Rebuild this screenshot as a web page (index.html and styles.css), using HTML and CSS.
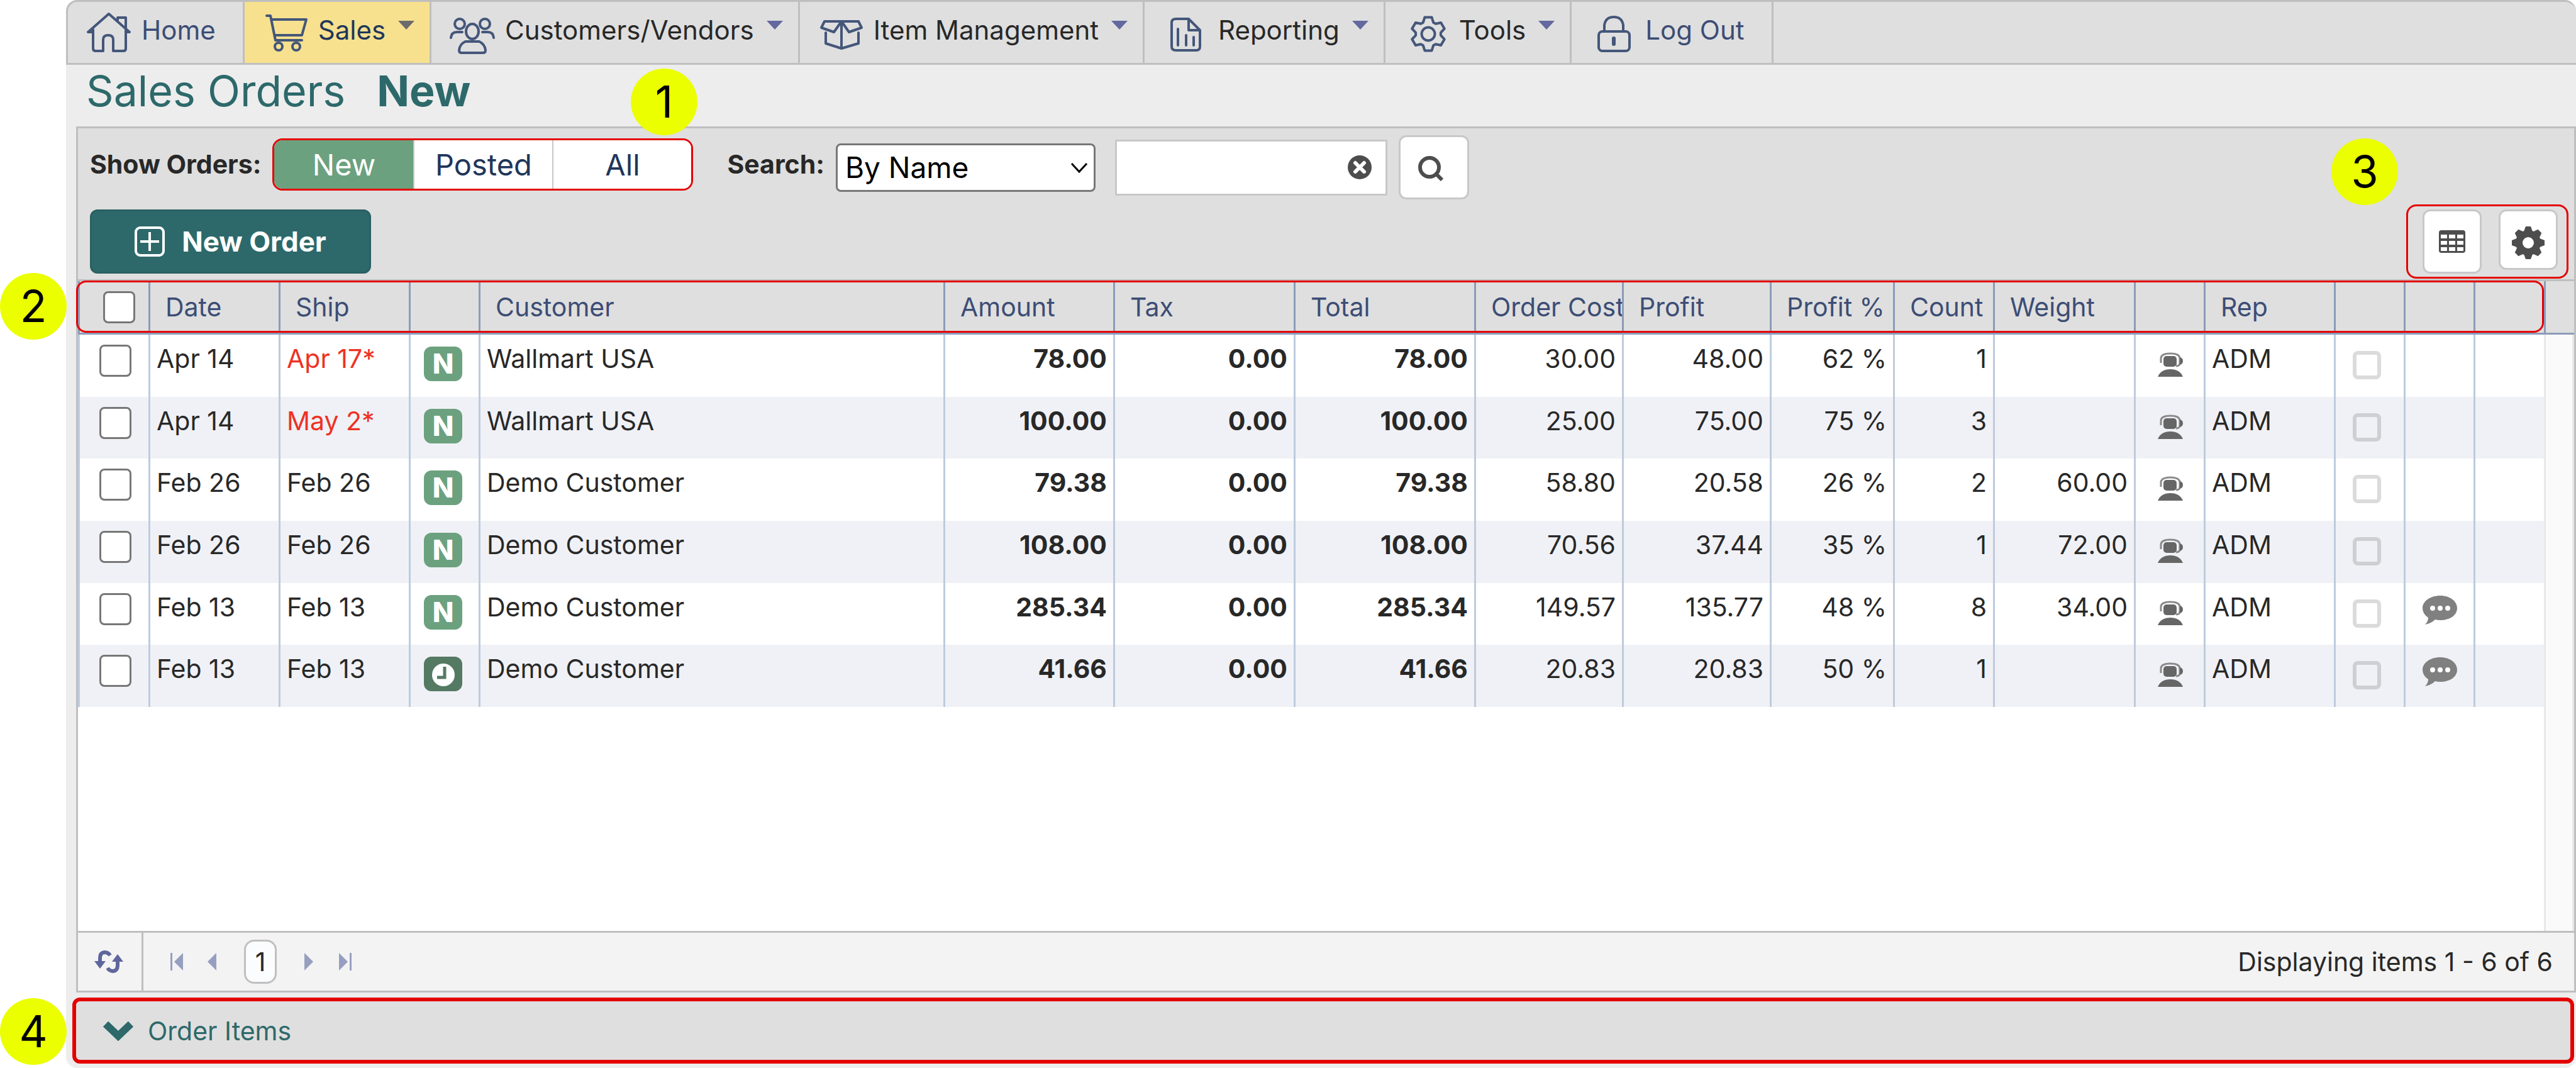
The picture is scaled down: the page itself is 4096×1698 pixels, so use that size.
FILE: index.html
```html
<!DOCTYPE html>
<html lang="en">
<head>
<meta charset="utf-8">
<title>Sales Orders</title>
<link rel="stylesheet" href="styles.css">
</head>
<body>
<svg class="sprite" aria-hidden="true">
  <symbol id="agent" viewBox="0 0 40 40">
    <path d="M5 17V9Q6 2 20 2T35 9V17Q35 22 29 22" fill="none" stroke="#8a8a8a" stroke-width="3"/>
    <rect x="9" y="6" width="21" height="17" rx="5" fill="#666"/>
    <path d="M35 8q5 1 5 6t-5 6z" fill="#666"/>
    <path d="M0 39Q5 27 20 27T40 39z" fill="#666"/>
  </symbol>
  <symbol id="comment" viewBox="0 0 56 46">
    <path d="M28 0C44 0 55 9 55 20S44 39 28 39Q23 39 20 38Q14 44 4 46Q9 41 9 35Q0 29 0 20C0 9 12 0 28 0z" fill="#808080"/>
    <circle cx="16" cy="20" r="4" fill="#fff"/><circle cx="28" cy="20" r="4" fill="#fff"/><circle cx="40" cy="20" r="4" fill="#fff"/>
  </symbol>
  <symbol id="clock" viewBox="0 0 61 55">
    <rect width="61" height="55" rx="12" fill="#557a64"/>
    <circle cx="31" cy="29" r="18" fill="#fff"/>
    <path d="M33 16V33H21" fill="none" stroke="#557a64" stroke-width="5"/>
  </symbol>
</svg>
<div class="page">
  <nav class="nav">
    <a class="nav-item nav-link" href="#"><svg class="nav-icon" viewBox="0 0 76 76"><path d="M4 35H12M4 35L37 6L70 35H64M12 31V61Q12 65 16 65H28V47Q28 40 36 40T44 47V65H60Q64 65 64 61V12H51V18"/></svg><span class="nav-text">Home</span></a>
    <a class="nav-item nav-active" href="#"><svg class="nav-icon" viewBox="0 0 76 76"><path d="M7 9H13L21 48H63M15 15H70L63 40H20"/><circle cx="26" cy="58" r="6"/><circle cx="54" cy="58" r="6"/></svg><span class="nav-text">Sales</span><span class="caret"></span></a>
    <a class="nav-item" href="#"><svg class="nav-icon" viewBox="0 0 76 76"><circle cx="17" cy="22" r="8"/><circle cx="57" cy="22" r="8"/><ellipse cx="37" cy="34" rx="10" ry="12"/><path d="M3 44Q4 35 12 35H21M71 44Q70 35 62 35H53M26 50H48Q57 54 58 64Q58 68 54 68H20Q16 68 16 64Q17 54 26 50z"/></svg><span class="nav-text">Customers/Vendors</span><span class="caret"></span></a>
    <a class="nav-item" href="#"><svg class="nav-icon" viewBox="0 0 76 76"><path d="M38 18H11L6 28L26 35L38 18L50 35L70 28L65 18H38V61L13 53V36M38 61L65 53V36"/></svg><span class="nav-text">Item Management</span><span class="caret"></span></a>
    <a class="nav-item" href="#"><svg class="nav-icon" viewBox="0 0 76 76"><path d="M22 14H42L60 32V58Q60 64 54 64H22Q15 64 15 58V20Q15 14 22 14zM42 14V32H60M25 30V56M38 40V56M50 43V56"/></svg><span class="nav-text">Reporting</span><span class="caret"></span></a>
    <a class="nav-item" href="#"><svg class="nav-icon" viewBox="0 0 76 76"><g transform="translate(40 38)"><path d="M-5.6-26.4H5.6L8.1-18.3L11.8-16.2L20.1-18L25.7-8.4L19.9-2.1V2.1L25.7 8.4L20.1 18L11.8 16.2L8.1 18.3L5.6 26.4H-5.6L-8.1 18.3L-11.8 16.2L-20.1 18L-25.7 8.4L-19.9 2.1V-2.1L-25.7-8.4L-20.1-18L-11.8-16.2L-8.1-18.3z"/><circle r="10.5"/></g></svg><span class="nav-text">Tools</span><span class="caret"></span></a>
    <a class="nav-item nav-link" href="#"><svg class="nav-icon" viewBox="0 0 76 76"><rect x="15" y="34" width="49" height="31" rx="6"/><path d="M24 34V24Q26 11 39 11T54 24V34"/><path d="M39 45V54" stroke-width="6"/></svg><span class="nav-text">Log Out</span></a>
  </nav>

  <h1 class="title"><span>Sales Orders</span><strong>New</strong></h1>

  <main class="panel">
    <div class="toolbar">
      <div class="toolbar-row">
        <div class="filters">
          <span class="label">Show Orders:</span>
          <div class="segments">
            <button class="segment segment-on" type="button">New</button>
            <button class="segment" type="button">Posted</button>
            <button class="segment" type="button">All</button>
          </div>
          <label class="label search-label" for="search-by">Search:</label>
        </div>
        <div class="select-wrap">
          <select class="select" id="search-by"><option>By Name</option></select>
          <svg class="select-arrow" viewBox="0 0 28 18"><path d="M2 2L14 15L26 2" fill="none" stroke="#000" stroke-width="3"/></svg>
        </div>
        <div class="search-field">
          <input class="search-input" type="text" aria-label="Search text">
          <button class="clear" type="button" aria-label="Clear"><svg viewBox="0 0 38 38"><circle cx="19" cy="19" r="19" fill="#4d4d4d"/><path d="M12 12L26 26M26 12L12 26" stroke="#fff" stroke-width="6" stroke-linecap="round"/></svg></button>
        </div>
        <button class="tool search-button" type="button" aria-label="Search"><svg width="44" height="44" viewBox="0 0 44 44"><circle cx="18" cy="22" r="15" fill="none" stroke="#4d4d4d" stroke-width="6"/><path d="M29 33L38 42" stroke="#4d4d4d" stroke-width="6"/></svg></button>
      </div>
      <div class="toolbar-row toolbar-actions">
        <button class="new-order" type="button"><svg width="48" height="48" viewBox="0 0 48 48" fill="none" stroke="#fff" stroke-width="4"><rect x="2" y="2" width="44" height="44" rx="7"/><path d="M24 9V39M9 24H39"/></svg><span>New Order</span></button>
        <div class="view-tools">
          <button class="tool" type="button" aria-label="Columns"><svg width="42" height="36" viewBox="0 0 42 36"><rect width="42" height="36" rx="4" fill="#4d4d4d"/><path d="M3 7h10v6H3zM16 7h10v6H16zM29 7h10v6H29zM3 17h10v6H3zM16 17h10v6H16zM29 17h10v6H29zM3 27h10v6H3zM16 27h10v6H16zM29 27h10v6H29z" fill="#fff"/></svg></button>
          <button class="tool tool-gear" type="button" aria-label="Settings"><svg width="54" height="54" viewBox="-27 -27 54 54"><g fill="#4d4d4d"><path id="tooth" d="M-4-26H4L7-18V18L4 26H-4L-7 18V-18z"/><use href="#tooth" transform="rotate(45)"/><use href="#tooth" transform="rotate(90)"/><use href="#tooth" transform="rotate(135)"/><circle r="20"/></g><circle r="9" fill="#fff"/></svg></button>
        </div>
      </div>
    </div>

    <div class="grid">
      <table class="orders">
        <colgroup><col class="c-check"><col class="c-date"><col class="c-date"><col class="c-icon"><col><col class="c-amount"><col class="c-total"><col class="c-total"><col class="c-cost"><col class="c-cost"><col class="c-percent"><col class="c-count"><col class="c-weight"><col class="c-icon"><col class="c-date"><col class="c-icon"><col class="c-icon"><col class="c-check"></colgroup>
        <thead>
          <tr><th class="pick"><input class="check" type="checkbox" aria-label="Select all"></th><th>Date</th><th>Ship</th><th></th><th>Customer</th><th>Amount</th><th>Tax</th><th>Total</th><th>Order Cost</th><th>Profit</th><th>Profit %</th><th>Count</th><th>Weight</th><th></th><th>Rep</th><th></th><th></th><th></th></tr>
        </thead>
        <tbody>
          <tr><td class="pick"><input class="check" type="checkbox" aria-label="Select order"></td><td>Apr 14</td><td class="late">Apr 17*</td><td class="status"><span class="status-new">N</span></td><td>Wallmart USA</td><td class="num sum">78.00</td><td class="num sum">0.00</td><td class="num sum">78.00</td><td class="num">30.00</td><td class="num">48.00</td><td class="num">62 %</td><td class="num">1</td><td class="num"></td><td class="agent"><svg><use href="#agent"/></svg></td><td>ADM</td><td class="flag"><span></span></td><td class="note"></td><td></td></tr>
          <tr><td class="pick"><input class="check" type="checkbox" aria-label="Select order"></td><td>Apr 14</td><td class="late">May 2*</td><td class="status"><span class="status-new">N</span></td><td>Wallmart USA</td><td class="num sum">100.00</td><td class="num sum">0.00</td><td class="num sum">100.00</td><td class="num">25.00</td><td class="num">75.00</td><td class="num">75 %</td><td class="num">3</td><td class="num"></td><td class="agent"><svg><use href="#agent"/></svg></td><td>ADM</td><td class="flag"><span></span></td><td class="note"></td><td></td></tr>
          <tr><td class="pick"><input class="check" type="checkbox" aria-label="Select order"></td><td>Feb 26</td><td>Feb 26</td><td class="status"><span class="status-new">N</span></td><td>Demo Customer</td><td class="num sum">79.38</td><td class="num sum">0.00</td><td class="num sum">79.38</td><td class="num">58.80</td><td class="num">20.58</td><td class="num">26 %</td><td class="num">2</td><td class="num">60.00</td><td class="agent"><svg><use href="#agent"/></svg></td><td>ADM</td><td class="flag"><span></span></td><td class="note"></td><td></td></tr>
          <tr><td class="pick"><input class="check" type="checkbox" aria-label="Select order"></td><td>Feb 26</td><td>Feb 26</td><td class="status"><span class="status-new">N</span></td><td>Demo Customer</td><td class="num sum">108.00</td><td class="num sum">0.00</td><td class="num sum">108.00</td><td class="num">70.56</td><td class="num">37.44</td><td class="num">35 %</td><td class="num">1</td><td class="num">72.00</td><td class="agent"><svg><use href="#agent"/></svg></td><td>ADM</td><td class="flag"><span></span></td><td class="note"></td><td></td></tr>
          <tr><td class="pick"><input class="check" type="checkbox" aria-label="Select order"></td><td>Feb 13</td><td>Feb 13</td><td class="status"><span class="status-new">N</span></td><td>Demo Customer</td><td class="num sum">285.34</td><td class="num sum">0.00</td><td class="num sum">285.34</td><td class="num">149.57</td><td class="num">135.77</td><td class="num">48 %</td><td class="num">8</td><td class="num">34.00</td><td class="agent"><svg><use href="#agent"/></svg></td><td>ADM</td><td class="flag"><span></span></td><td class="note"><svg><use href="#comment"/></svg></td><td></td></tr>
          <tr><td class="pick"><input class="check" type="checkbox" aria-label="Select order"></td><td>Feb 13</td><td>Feb 13</td><td class="status"><svg><use href="#clock"/></svg></td><td>Demo Customer</td><td class="num sum">41.66</td><td class="num sum">0.00</td><td class="num sum">41.66</td><td class="num">20.83</td><td class="num">20.83</td><td class="num">50 %</td><td class="num">1</td><td class="num"></td><td class="agent"><svg><use href="#agent"/></svg></td><td>ADM</td><td class="flag"><span></span></td><td class="note"><svg><use href="#comment"/></svg></td><td></td></tr>
        </tbody>
      </table>
      <div class="gutter"><div class="gutter-head"></div><div class="gutter-track"></div></div>
      <div class="header-outline"></div>
    </div>

    <div class="pager">
      <button class="pager-button refresh" type="button" aria-label="Refresh"><svg width="46" height="36" viewBox="0 0 46 36" fill="none" stroke="#5f659c" stroke-width="6"><path d="M25 8Q22 3 16 3Q9 4 9 12V20"/><path d="M0 17H18L9 29z" fill="#5f659c" stroke="none"/><path d="M21 28Q24 33 30 33Q37 32 37 24V14"/><path d="M28 18H46L37 6z" fill="#5f659c" stroke="none"/></svg></button>
      <div class="pages">
        <button class="pager-button" type="button" aria-label="First page"><svg width="20" height="28" viewBox="0 0 20 28" fill="#979fc0"><path d="M0 0H3V28H0zM20 0V28L6 14z"/></svg></button>
        <button class="pager-button prev" type="button" aria-label="Previous page"><svg width="14" height="28" viewBox="0 0 14 28" fill="#979fc0"><path d="M14 0V28L0 14z"/></svg></button>
        <button class="pager-button page-number" type="button">1</button>
        <button class="pager-button next" type="button" aria-label="Next page"><svg width="14" height="28" viewBox="0 0 14 28" fill="#979fc0"><path d="M0 0V28L14 14z"/></svg></button>
        <button class="pager-button" type="button" aria-label="Last page"><svg width="20" height="28" viewBox="0 0 20 28" fill="#979fc0"><path d="M17 0H20V28H17zM0 0V28L14 14z"/></svg></button>
      </div>
      <span class="pager-info">Displaying items 1 - 6 of 6</span>
    </div>
  </main>

  <button class="order-items" type="button"><svg width="50" height="32" viewBox="0 0 50 32"><path d="M5 5L25 24L45 5" fill="none" stroke="#2d696a" stroke-width="12"/></svg><span>Order Items</span></button>
</div>
<div class="badge badge-1">1</div>
<div class="badge badge-2">2</div>
<div class="badge badge-3">3</div>
<div class="badge badge-4">4</div>
</body>
</html>
```
FILE: styles.css
```css
* { box-sizing: border-box; }

body {
  margin: 0;
  position: relative;
  background: #fff;
  color: #282828;
  font-family: Inter, "Liberation Sans", sans-serif;
  font-size: 41px;
}

button, input, select { margin: 0; padding: 0; color: inherit; font: inherit; }
a { color: inherit; text-decoration: none; }
svg { display: block; }
.sprite { position: absolute; width: 0; height: 0; }

.page {
  display: flex;
  flex-direction: column;
  min-height: 100vh;
  margin-left: 105px;
  padding-bottom: 7px;
  background: #ededed;
  border-radius: 18px;
}

/* Main menu */
.nav {
  display: flex;
  height: 103px;
  background: #dfdfdf;
  border: 3px solid #bfbfbf;
  border-right: 0;
  border-radius: 18px 18px 0 0;
  font-size: 42px;
}
.nav-item {
  display: flex;
  align-items: flex-start;
  padding: 0 24px 0 28px;
  border-right: 3px solid #bfbfbf;
}
.nav-link { padding-right: 43px; color: #3c4d75; }
.nav-active { background: #f7e18f; color: #20365a; }
.nav-icon {
  width: 76px;
  height: 76px;
  margin: 13px 13px 0 0;
  fill: none;
  stroke: #44567a;
  stroke-width: 4;
  stroke-linejoin: round;
  stroke-linecap: round;
}
.nav-text { line-height: 89px; white-space: nowrap; }
.caret {
  margin: 30px 0 0 20px;
  border: 13px solid transparent;
  border-top: 14px solid #63689e;
  border-bottom: 0;
}
.nav-active .caret { border-top-color: #6b6b6b; }

.title {
  display: flex;
  gap: 50px;
  height: 98px;
  margin: 0;
  padding-left: 32px;
  color: #2d696a;
  font-size: 68px;
  font-weight: 400;
  line-height: 82px;
}

/* Orders panel */
.panel {
  display: flex;
  flex: 1;
  flex-direction: column;
  margin-left: 16px;
  border: 3px solid #bfbfbf;
  background: #fff;
}
.toolbar {
  display: flex;
  flex-direction: column;
  gap: 8px;
  padding: 11px 9px 1px 19px;
  background: #dfdfdf;
  border-bottom: 3px solid #bfbfbf;
}
.toolbar-row { display: flex; align-items: center; }
.toolbar-actions { justify-content: space-between; }
.filters { display: flex; align-items: center; padding-bottom: 10px; }
.label { font-weight: 700; }
.search-label { margin-left: 54px; }
.segments {
  display: flex;
  margin-left: 18px;
  border: 3px solid #e50000;
  border-radius: 16px;
  background: #fff;
  overflow: hidden;
}
.segment {
  width: 221px;
  height: 77px;
  border: 0;
  border-left: 2px solid #c8c8c8;
  background: #fff;
  color: #20365a;
  font-size: 47px;
}
.segment-on { border-left: 0; background: #6ca17f; color: #fff; }

.select-wrap { position: relative; margin-left: 18px; }
.select {
  display: block;
  width: 413px;
  height: 77px;
  padding-left: 12px;
  appearance: none;
  border: 3px solid #777;
  border-radius: 8px;
  background: #fff;
  color: #000;
  font-size: 46px;
}
.select-arrow {
  position: absolute;
  right: 12px;
  top: 30px;
  width: 28px;
  height: 18px;
  pointer-events: none;
}
.search-field {
  display: flex;
  align-items: center;
  width: 433px;
  height: 89px;
  margin-left: 31px;
  padding-right: 22px;
  border: 3px solid #c8c8c8;
  background: #fff;
}
.search-input { flex: 1; min-width: 0; height: 100%; padding: 0 20px; border: 0; background: transparent; }
.clear { width: 38px; height: 38px; border: 0; background: none; }

.tool {
  display: flex;
  align-items: center;
  justify-content: center;
  width: 94px;
  height: 102px;
  border: 3px solid #c8c8c8;
  border-radius: 12px;
  background: #fff;
}
.tool-gear { height: 96px; padding-top: 10px; }
.search-button { width: 112px; margin-left: 18px; padding-right: 6px; }
.new-order {
  display: flex;
  align-items: center;
  justify-content: center;
  gap: 27px;
  width: 447px;
  height: 102px;
  border: 3px solid #2a6163;
  border-radius: 12px;
  background: #2d696a;
  color: #fff;
  font-size: 44px;
  font-weight: 700;
}
.view-tools {
  display: flex;
  align-items: flex-start;
  gap: 27px;
  height: 118px;
  padding: 5px 14px 0 23px;
  border: 3px solid #e50000;
  border-radius: 16px;
}

/* Orders grid */
.grid { position: relative; display: flex; flex: 1; align-items: stretch; }
.orders {
  flex: 1;
  align-self: flex-start;
  width: 100%;
  height: 677px;
  border-collapse: separate;
  border-spacing: 0;
  table-layout: fixed;
}
.c-check { width: 112px; }
.c-date { width: 207px; }
.c-icon { width: 111px; }
.c-amount { width: 270px; }
.c-total { width: 287px; }
.c-cost { width: 235px; }
.c-percent { width: 196px; }
.c-count { width: 159px; }
.c-weight { width: 224px; }

th, td { overflow: hidden; white-space: nowrap; text-align: left; }
th {
  height: 85px;
  padding: 0 0 0 24px;
  border-left: 3px solid #8c9bb9;
  border-bottom: 3px solid #8c9bb9;
  background: #dfdfdf;
  color: #3c4d75;
  font-weight: 400;
}
td {
  padding: 0 10px;
  border-left: 3px solid #becbde;
  line-height: 76px;
  vertical-align: top;
}
tbody tr:nth-child(even) { background: #f0f1f6; }
.check {
  display: block;
  width: 51px;
  height: 51px;
  appearance: none;
  border: 3px solid #777;
  border-radius: 8px;
  background: #fff;
}
th.pick { padding-left: 37px; }
td.pick { padding: 16px 0 0 31px; }
.late { color: #ee3124; }
.num { text-align: right; }
.sum { font-weight: 700; }
.status { padding: 19px 0 0 21px; }
.status svg, .status-new { display: block; width: 61px; height: 55px; }
.status-new {
  border-radius: 12px;
  background: #6ca17f;
  color: #fff;
  font-size: 44px;
  font-weight: 800;
  line-height: 55px;
  text-align: center;
}
.agent { padding: 28px 0 0 35px; }
.agent svg { width: 40px; height: 40px; }
.flag { padding: 26px 0 0 27px; }
.flag span {
  display: block;
  width: 45px;
  height: 45px;
  border: 6px solid rgba(0, 0, 0, .14);
  border-radius: 8px;
}
.note { padding: 20px 0 0 27px; }
.note svg { width: 56px; height: 46px; }

.gutter { display: flex; flex-direction: column; width: 48px; }
.gutter-head {
  height: 85px;
  background: #dfdfdf;
  border-left: 3px solid #8c9bb9;
  border-bottom: 3px solid #8c9bb9;
}
.gutter-track { flex: 1; background: #fafafa; border: 3px solid #e8e8e8; border-width: 0 3px; }
.header-outline {
  position: absolute;
  top: -1px;
  left: -3px;
  right: 48px;
  height: 83px;
  border: 3px solid #e50000;
  border-radius: 16px;
  pointer-events: none;
}

/* Pager */
.pager {
  display: flex;
  align-items: center;
  height: 95px;
  padding-right: 34px;
  border-top: 3px solid #bfbfbf;
  background: #f3f3f3;
}
.pager-button {
  display: flex;
  align-items: center;
  justify-content: center;
  border: 0;
  background: none;
}
.refresh { width: 104px; height: 92px; padding-right: 3px; border-right: 3px solid #bfbfbf; }
.pages { display: flex; align-items: center; margin-left: 43px; }
.prev { margin: 0 44px 0 39px; }
.page-number {
  width: 52px;
  height: 70px;
  border: 3px solid #bfbfbf;
  border-radius: 16px;
  background: #fbfcfd;
}
.next { margin: 0 41px 0 44px; }
.pager-info { margin-left: auto; }

.order-items {
  display: flex;
  align-items: center;
  gap: 22px;
  height: 105px;
  margin: 8px 3px 0 10px;
  padding-left: 42px;
  border: 6px solid #e50000;
  border-radius: 12px;
  background: #dfdfdf;
  color: #2d696a;
}

/* Callout numbers */
.badge {
  position: absolute;
  width: 106px;
  height: 106px;
  border-radius: 50%;
  background: #ebff00;
  color: #000;
  font-size: 70px;
  line-height: 106px;
  text-align: center;
}
.badge-1 { left: 1003px; top: 109px; }
.badge-2 { left: 0; top: 434px; }
.badge-3 { right: 283px; top: 220px; }
.badge-4 { left: 0; bottom: 5px; }
```
